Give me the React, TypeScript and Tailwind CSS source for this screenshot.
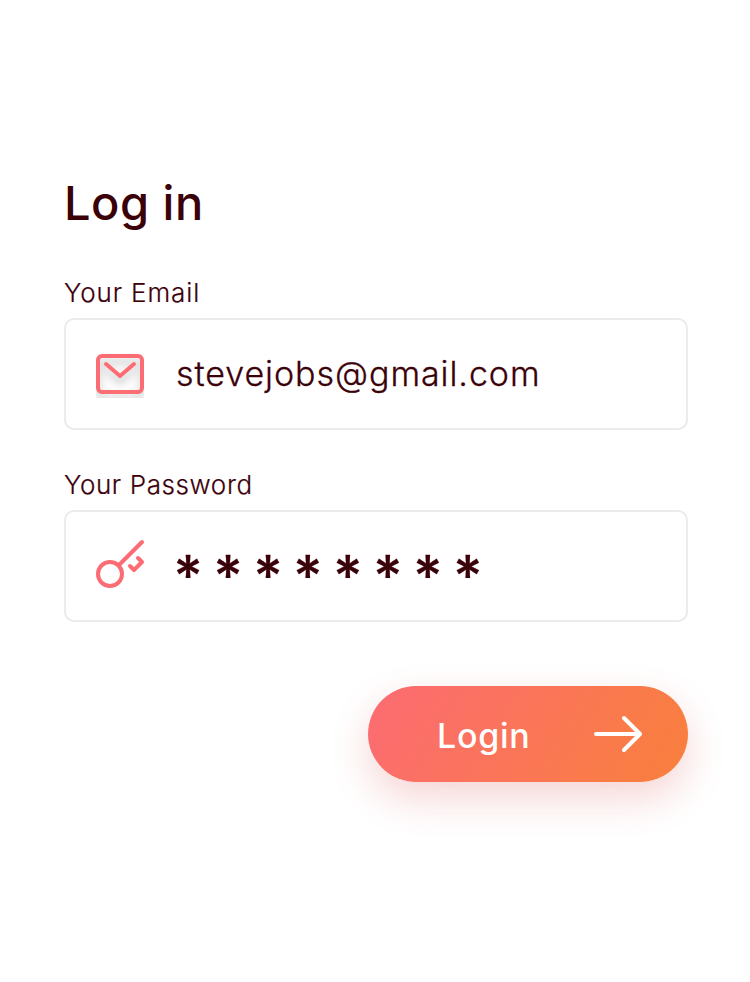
import type { ReactNode } from 'react';

const CORAL = '#fc6c74';

function MailIcon() {
  return (
    <svg className="block h-12 w-12 shrink-0" viewBox="0 0 48 48" fill="none">
      <defs>
        <filter id="mail-shadow" x="0" y="0" width="48" height="48" filterUnits="userSpaceOnUse">
          <feDropShadow dx="0" dy="6" stdDeviation="4" floodColor="#000" floodOpacity="0.25" />
        </filter>
      </defs>
      <g filter="url(#mail-shadow)" stroke={CORAL} strokeWidth="4" strokeLinecap="round" strokeLinejoin="round">
        <rect x="2" y="6" width="44" height="36" rx="4" />
        <path d="M10 14 24 26 38 14" />
      </g>
    </svg>
  );
}

function KeyIcon() {
  return (
    <svg className="block h-12 w-12 shrink-0 overflow-visible" viewBox="0 0 48 48" fill="none" stroke={CORAL} strokeWidth="4" strokeLinecap="round" strokeLinejoin="round">
      <circle cx="14" cy="32" r="12" />
      <path d="M23 23 46 0" />
      <path d="M34 24 38 28 46 20 42 16" />
    </svg>
  );
}

function ArrowIcon() {
  return (
    <svg className="block h-12 w-12 shrink-0" viewBox="0 0 48 48" fill="none" stroke="#fff" strokeWidth="4" strokeLinecap="round" strokeLinejoin="round">
      <path d="M2 24H46M30 8 46 24 30 40" />
    </svg>
  );
}

function Field({ label, icon, children }: { label: ReactNode; icon: ReactNode; children: ReactNode }) {
  return (
    <div className="mb-8 h-40">
      <div className="flex h-8 items-center whitespace-nowrap pt-0.5 text-[26px] font-light leading-8 [-webkit-text-stroke:0.2px]">{label}</div>
      <div className="mt-2.5 flex h-28 items-center gap-8 rounded-[10px] border-2 border-[#ebebeb] bg-white pl-[30px]">
        {icon}
        {children}
      </div>
    </div>
  );
}

export default function App() {
  return (
    <main className="h-[982px] w-[750px] overflow-hidden bg-white pl-16 pr-[62px] pt-[171px] font-['Inter',sans-serif] text-[#3b0109]">
      <h1 className="h-16 text-[47px] font-medium leading-[64px] tracking-[0.5px]">Log in</h1>
      <div className="mt-[41px]">
        <Field label={<span className="tracking-[0.88px]">Your Email</span>} icon={<MailIcon />}>
          <span className="text-[34px] font-light leading-none tracking-[0.94px] [-webkit-text-stroke:0.3px]">stevejobs@gmail.com</span>
        </Field>
        <Field label={<span className="tracking-[0.6px]">Your Password</span>} icon={<KeyIcon />}>
          <span className="-ml-[2.5px] pt-[19px] text-[56px] font-medium leading-none tracking-[10.8px] [-webkit-text-stroke:0.3px]">********</span>
        </Field>
      </div>
      <div className="mt-[58px] flex justify-end">
        <button className="flex h-24 w-80 items-center justify-between rounded-full bg-linear-[120deg,#fc6b73,#f9803c] pl-[69px] pr-[46px] text-white shadow-[0_16px_40px_rgba(208,40,40,0.2)]">
          <span className="pt-1 text-[34px] font-medium leading-none tracking-[0.7px]">Login</span>
          <ArrowIcon />
        </button>
      </div>
    </main>
  );
}
